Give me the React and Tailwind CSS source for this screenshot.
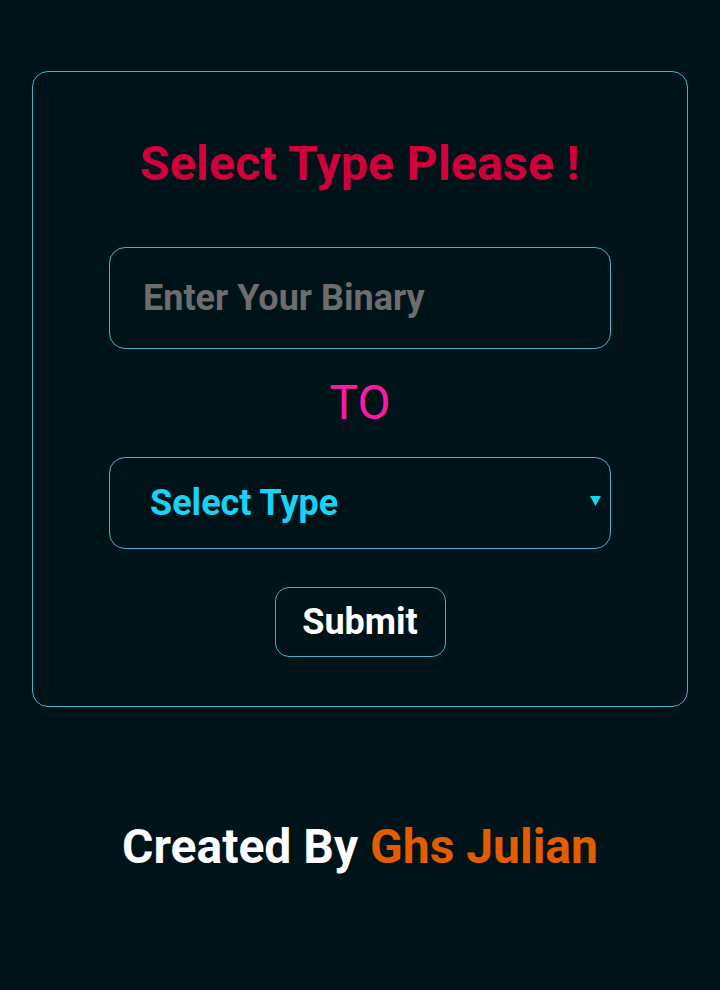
import React from "react";

export default function App() {
  const font = { fontFamily: "Roboto, 'Liberation Sans', sans-serif" };

  return (
    <div className="min-h-screen bg-[#001318] flex flex-col pt-[71px]" style={font}>
      {/* converter card */}
      <div className="mx-[32px] border border-[#3fb3c7] rounded-[16px] flex flex-col items-center pt-[63px] pb-[49px]">
        <h1 className="text-[48.7px] leading-[58px] font-bold text-[#d2003a]">Select Type Please !</h1>

        <input
          type="text"
          placeholder="Enter Your Binary"
          className="mt-[54px] w-[502px] h-[102px] bg-transparent border border-[#3fb3c7] rounded-[16px] pl-[33px] text-[36px] font-bold text-white placeholder:text-[#6d6d6d] outline-none"
        />

        <div className="my-[25px] text-[48px] leading-[58px] text-[#ff1aa6]">TO</div>

        <div className="relative w-[502px] h-[92px]">
          <select
            defaultValue=""
            className="appearance-none w-full h-full bg-transparent border border-[#3fb3c7] rounded-[16px] pl-[40px] text-[36px] font-bold text-[#19d3f5] outline-none"
          >
            <option value="" className="bg-[#001318]">Select Type</option>
            <option value="dec" className="bg-[#001318]">Decimal</option>
            <option value="oct" className="bg-[#001318]">Octal</option>
            <option value="hex" className="bg-[#001318]">Hexadecimal</option>
          </select>
          <svg className="absolute right-[10px] top-[39px] pointer-events-none" width="11" height="10" viewBox="0 0 11 10">
            <path d="M0 0 L11 0 L5.5 10 Z" fill="#19d3f5" />
          </svg>
        </div>

        <button className="mt-[38px] w-[171px] h-[70px] border border-[#3fb3c7] rounded-[14px] text-[36px] font-bold text-white">
          Submit
        </button>
      </div>

      <div className="mt-[112px] text-center text-[48px] leading-[56px] font-bold text-white">
        Created By <span className="text-[#e35d00]">Ghs Julian</span>
      </div>
    </div>
  );
}
